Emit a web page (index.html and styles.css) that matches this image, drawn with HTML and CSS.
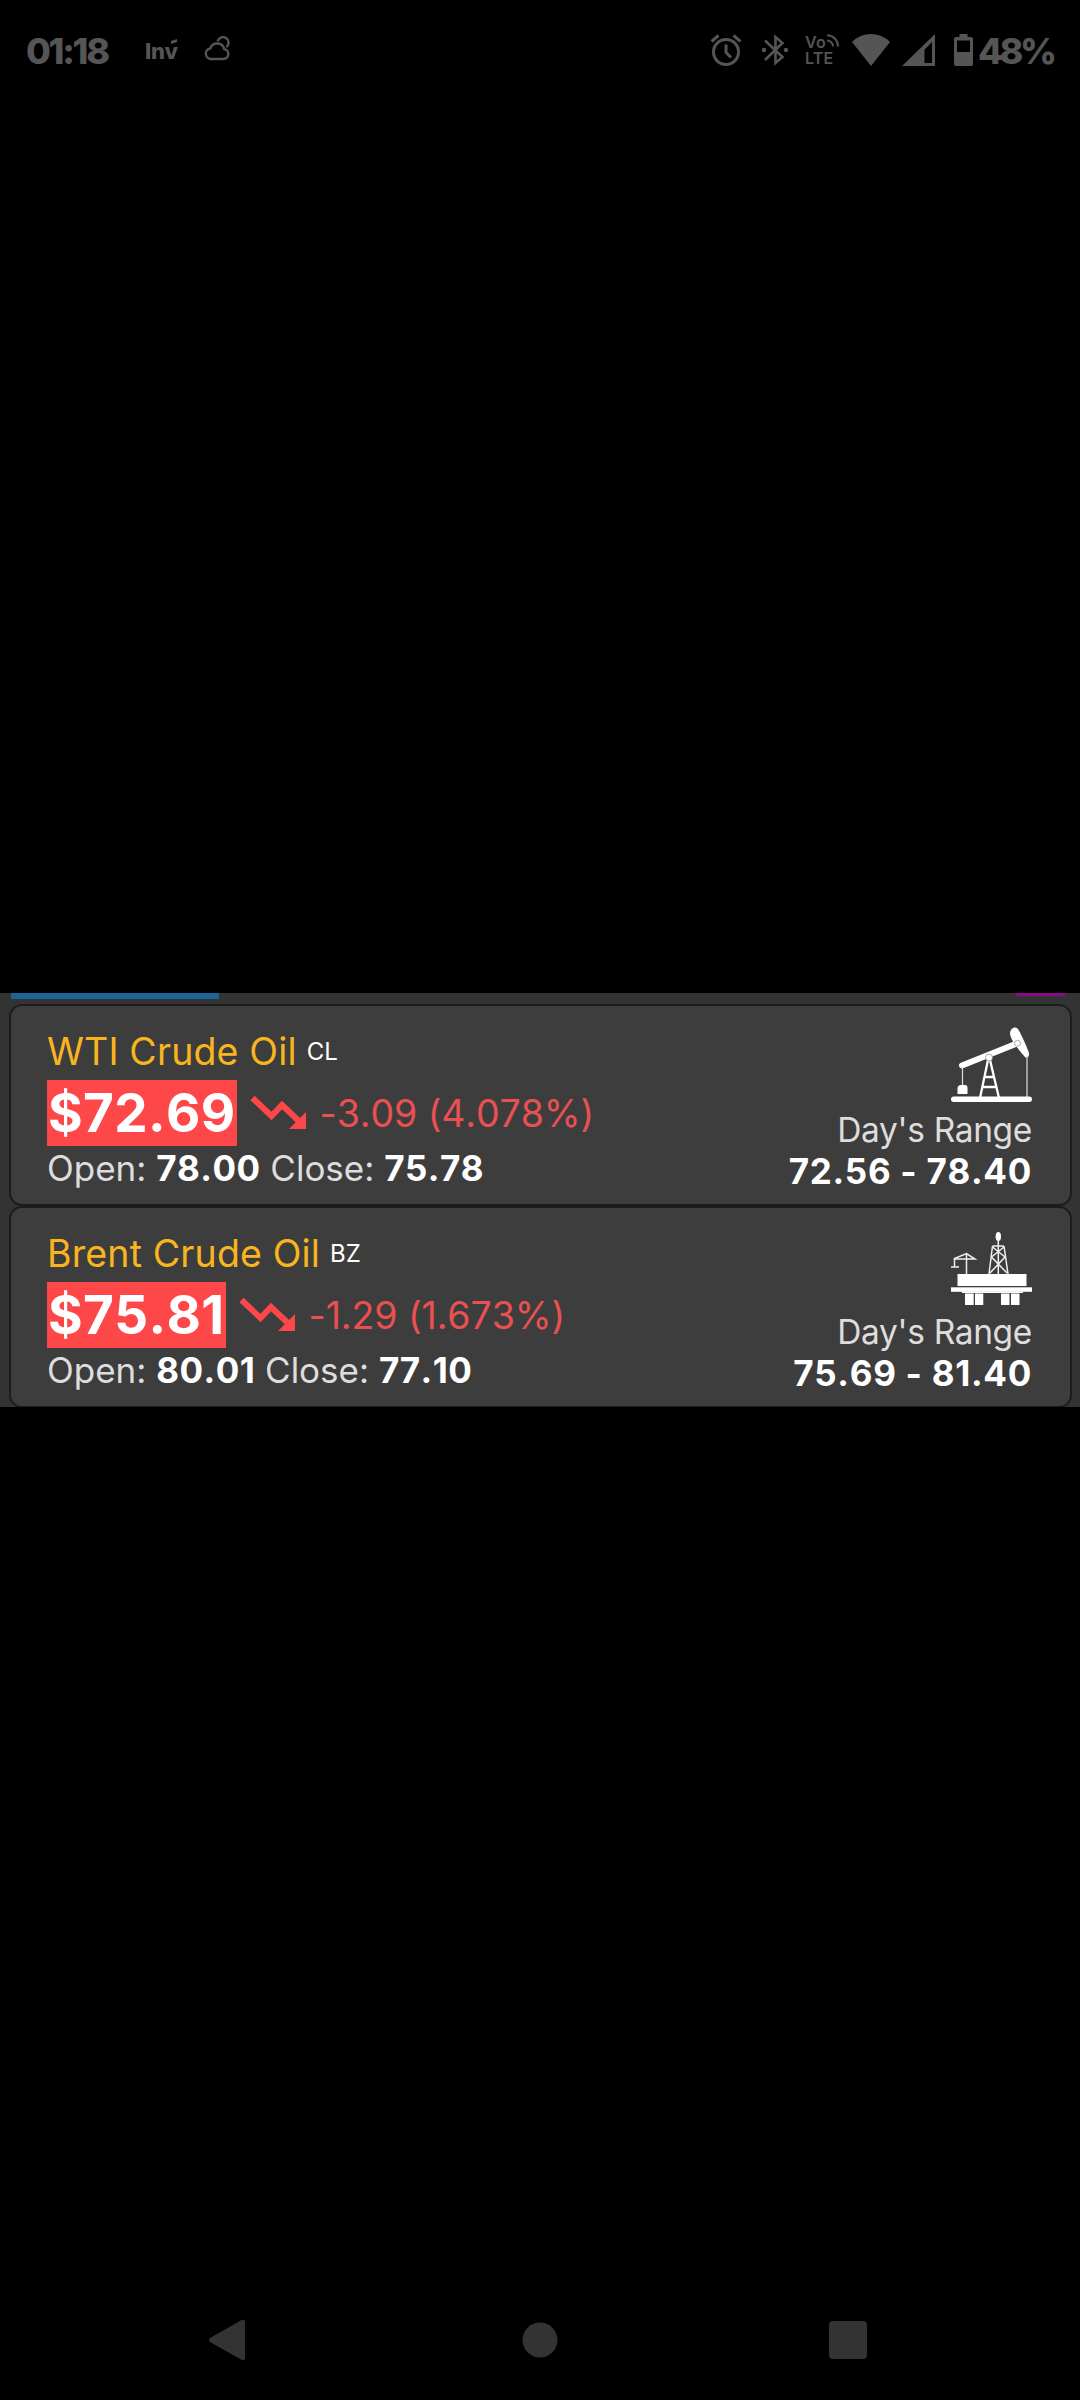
FILE: index.html
```html
<!DOCTYPE html>
<html lang="en">
<head>
<meta charset="utf-8">
<title>Oil prices</title>
<link rel="stylesheet" href="styles.css">
</head>
<body>
<div class="screen">
  <header class="status">
    <span class="clock">01:18</span>
    <span class="inv">Inv<svg class="inv-accent" width="6" height="5" viewBox="0 0 6 5"><path d="M0 2L6 0V3L0 5z"/></svg></span>
    <svg class="cloud" width="28" height="26" viewBox="0 0 28 26"><path d="M7.500 23H20.500a5 5 0 0 0 .8-9.900A7.300 7.300 0 0 0 7.300 12.500A5.300 5.300 0 0 0 7.500 23zM15 4.500A5.500 5.500 0 1 1 24 10.500"/></svg>
    <div class="tray">
      <svg class="alarm" width="32" height="32" viewBox="0 0 32 32"><g fill="none" stroke="#555" stroke-width="3"><circle cx="16" cy="18" r="12.500"/><path d="M16 10.500V18.500L21 23.500M1.500 7.500L8.500 1.500M30.500 7.500L23.500 1.500"/></g></svg>
      <svg class="bt" width="28" height="32" viewBox="0 0 28 32"><path fill="none" stroke="#555" stroke-width="2.600" d="M4 6.500L21.500 23L14.500 29V3L21.500 9L4 26"/><circle cx="3" cy="16" r="2.200" fill="#555"/><circle cx="25" cy="16" r="2.200" fill="#555"/></svg>
      <div class="volte"><span class="vo">Vo<svg width="12" height="13" viewBox="0 0 12 13"><path fill="none" stroke="#555" stroke-width="2" d="M0 6.500A6 6 0 0 1 6 12.500M0 1.200A11 11 0 0 1 11 12.500"/></svg></span><span>LTE</span></div>
      <svg class="wifi" width="38" height="32" viewBox="0 0 38 32"><path fill="#555" d="M0 8Q8 0 19 0T38 8L19 32z"/></svg>
      <svg class="signal" width="33" height="32" viewBox="0 0 33 32"><path fill="#555" fill-rule="evenodd" d="M33 0V32H0zM30 8L22.500 15.500V29H30z"/></svg>
      <svg class="battery" width="19" height="32" viewBox="0 0 19 32"><path fill="#555" fill-rule="evenodd" d="M5.500 0H13.500V3H17Q19 3 19 5V30Q19 32 17 32H2Q0 32 0 30V5Q0 3 2 3H5.500zM3 6.500V18H16V6.500z"/></svg>
      <span class="percent">48%</span>
    </div>
  </header>
  <main class="panel">
    <div class="strip"><div class="blue"></div><div class="purple"></div></div>
    <section class="card">
      <div class="quote">
        <div class="title"><span class="name">WTI Crude Oil</span><span class="code">CL</span></div>
        <div class="price-row"><span class="price">$72.69</span><svg class="trend" width="57" height="36" viewBox="0 0 57 36"><path fill="none" stroke="#fd4748" stroke-width="6" d="M2.500 3L21.500 21L32 10L51 28"/><path fill="#fd4748" d="M56 17V34H39z"/></svg><span class="change">-3.09 (4.078%)</span></div>
        <div class="session">Open: <b>78.00</b> Close: <b>75.78</b></div>
      </div>
      <div class="range">
        <svg width="81" height="76" viewBox="0 0 81 76" fill="#fff">
          <path stroke="#fff" stroke-width="6" stroke-linecap="round" d="M11 38.500L67 16"/>
          <path d="M59.500 9C57.500 3 63 -1.500 66.500 1.500C68.500 3.500 75 17.500 78 26Q78.500 31 74.500 30.500C70 26 61 15 59.500 9z"/>
          <circle cx="66.500" cy="16.300" r="3" stroke="#777" stroke-width=".6"/>
          <path fill="none" stroke="#ddd" stroke-width="1.200" d="M11.500 40V60M76 29V70"/>
          <path d="M6.500 67V61Q7 58 10 58H14Q16.500 58 16.500 61V67z"/>
          <path fill="none" stroke="#fff" stroke-width="2.300" d="M37 33L29 71M39 33L48 71M34 50H43M32 60H45"/>
          <circle cx="38" cy="30.500" r="3.500" stroke="#777" stroke-width=".6"/>
          <rect x="0" y="69.500" width="81" height="5.500" rx="2.700"/>
        </svg>
        <span class="label">Day's Range</span><span class="values">72.56 - 78.40</span>
      </div>
    </section>
    <section class="card">
      <div class="quote">
        <div class="title"><span class="name">Brent Crude Oil</span><span class="code">BZ</span></div>
        <div class="price-row"><span class="price">$75.81</span><svg class="trend" width="57" height="36" viewBox="0 0 57 36"><path fill="none" stroke="#fd4748" stroke-width="6" d="M2.500 3L21.500 21L32 10L51 28"/><path fill="#fd4748" d="M56 17V34H39z"/></svg><span class="change">-1.29 (1.673%)</span></div>
        <div class="session">Open: <b>80.01</b> Close: <b>77.10</b></div>
      </div>
      <div class="range">
        <svg width="81" height="76" viewBox="0 -3 81 76" fill="#fff">
          <ellipse cx="47.300" cy="4.500" rx="2.700" ry="4.500"/>
          <path fill="none" stroke="#eee" stroke-width="1.500" d="M47.300 7V42M41.500 14H53M41.500 14L38 42M53 14L57 42M41.500 15L54 25L39 41M53 15L40.500 25L56 41M15.500 22V42M2.500 27H24L15.500 21.500L3.500 26.500V35M0 35H8"/>
          <rect x="6.500" y="42" width="69" height="12"/><rect x="0" y="55.300" width="81" height="4.500"/><path d="M11 59.500H72V61H11zM14 61.500H22.700V73H14zM24 61.500H32.300V73H24zM50 61.500H58.500V73H50zM60 61.500H68.500V73H60z"/>
        </svg>
        <span class="label">Day's Range</span><span class="values">75.69 - 81.40</span>
      </div>
    </section>
  </main>
  <nav class="nav">
    <svg width="36" height="42" viewBox="0 0 36 42"><path fill="#333" d="M1 19L33 .8Q36 0 36 3V39Q36 42 33 41L1 23Q-1 21 1 19z"/></svg>
    <svg class="home" width="36" height="36" viewBox="0 0 36 36"><circle cx="18" cy="18" r="17.500" fill="#333"/></svg>
    <svg width="38" height="38" viewBox="0 0 38 38"><rect width="38" height="38" rx="4" fill="#333"/></svg>
  </nav>
</div>
</body>
</html>
```
FILE: styles.css
```css
* { box-sizing: border-box; }
body { margin: 0; background: #000; font-family: Inter, "Liberation Sans", sans-serif; }
svg { display: block; flex: none; }
.screen { display: flex; flex-direction: column; width: 1080px; height: 2400px; overflow: hidden; }

.status { display: flex; align-items: center; height: 102px; padding: 0 26px; margin-bottom: 891px; color: #555; white-space: nowrap; }
.clock { width: 119px; font-size: 36px; font-weight: 800; letter-spacing: -2.3px; }
.inv { position: relative; width: 58px; font-size: 22px; font-weight: 800; letter-spacing: -0.2px; }
.inv-accent { position: absolute; left: 26px; top: 1px; fill: #555; }
.cloud { fill: none; stroke: #555; stroke-width: 2.4; stroke-linecap: round; margin-top: -4px; }
.tray { display: flex; align-items: center; margin-left: auto; height: 32px; margin-top: -2px; }
.bt { margin-left: 19px; }
.volte { display: flex; flex-direction: column; width: 34px; margin-left: 16px; font-size: 16px; font-weight: 600; line-height: 16px; letter-spacing: 0.2px; }
.vo { display: flex; }
.vo svg { margin-left: 1px; }
.wifi { margin-left: 13px; }
.signal { margin-left: 12px; }
.battery { margin-left: 19px; }
.percent { width: 76px; margin-left: 5px; padding-top: 2px; font-size: 36px; font-weight: 800; letter-spacing: -3.4px; }

.panel { height: 414px; overflow: hidden; background: #333; padding: 0 8px 0 9px; }
.strip { display: flex; justify-content: space-between; height: 11px; padding: 0 6px 0 2px; }
.blue { width: 208px; height: 6px; background: #1a6699; }
.purple { width: 51px; height: 3px; background: #8b0a8b; border-radius: 0 0 3px 3px; }
.card { display: flex; justify-content: space-between; height: 202px; padding: 19px 38px 0 36px; background: #3d3d3d; border: 2px solid #1c1c1c; border-radius: 13px; white-space: nowrap; }
.title { display: flex; align-items: center; height: 54px; line-height: 54px; }
.name { font-size: 37.5px; letter-spacing: 0.15px; color: #f9b51d; }
.code { margin-left: 10px; font-size: 24px; color: #fff; }
.price-row { display: flex; align-items: center; height: 67px; font-kerning: none; }
.price { height: 66px; padding: 0 1px; background: #fd4748; color: #fff; font-size: 53px; font-weight: 700; line-height: 66px; letter-spacing: 0.35px; }
.trend { margin-left: 13px; }
.change { margin-left: 13px; font-size: 37.5px; line-height: 46px; padding-top: 2px; color: #e95052; letter-spacing: -0.1px; }
.session { height: 44px; line-height: 44px; font-size: 35px; color: #ddd; }
.session b { color: #fff; font-weight: 700; font-kerning: none; letter-spacing: 0.45px; }
.range { display: flex; flex-direction: column; align-items: flex-end; padding-top: 2px; }
.range svg { margin-bottom: 7px; }
.label { height: 41px; line-height: 41px; font-size: 33.5px; letter-spacing: -0.35px; color: #ddd; }
.values { height: 41px; line-height: 41px; font-size: 35px; font-weight: 700; font-kerning: none; letter-spacing: 0.7px; color: #fff; }

.nav { display: flex; align-items: center; justify-content: space-between; height: 120px; margin-top: auto; padding: 0 213px 0 209px; }
.home { margin-left: 5px; }
```
